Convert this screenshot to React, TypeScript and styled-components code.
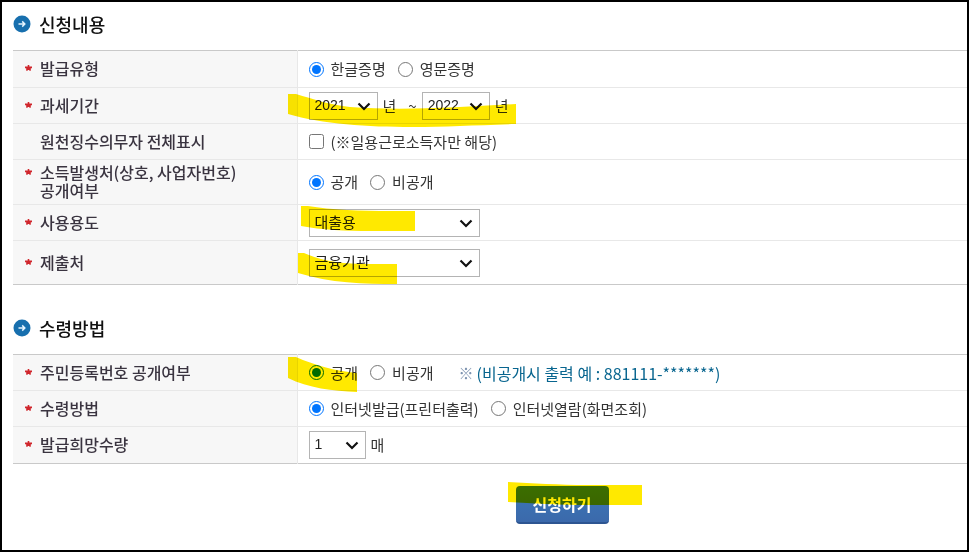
import React, { useId } from "react";
import styled, { createGlobalStyle } from "styled-components";

const GlobalStyle = createGlobalStyle`
  *, *::before, *::after { box-sizing: border-box; }
  html, body, #root { height: 100%; }
  body {
    margin: 0;
    background: #fff;
    color: #333;
    font: 15px/18px "Noto Sans CJK KR", sans-serif;
  }
`;

const Page = styled.form`
  min-height: 100%;
  border: 2px solid #000;
  padding: 0 0 0 11px;
`;

const Section = styled.section`
  padding-top: 7px;
  & + & { padding-top: 28px; }
`;

const SectionTitle = styled.h2`
  display: flex;
  align-items: center;
  gap: 8px;
  height: 30px;
  margin: 0 0 11px;
  color: #111;
  font-size: 18px;
  font-weight: 500;
  line-height: 30px;
`;

const FormTable = styled.table`
  width: 100%;
  border-collapse: collapse;
  border-top: 1px solid #c9c9c9;
  border-bottom: 1px solid #c9c9c9;
`;

const Row = styled.tr<{ $height?: number }>`
  height: ${(p) => p.$height ?? 36}px;
  & + & { border-top: 1px solid #e8e8e8; }
`;

const LabelCell = styled.th`
  width: 284px;
  padding: 0 40px 2px 27px;
  background: #f7f7f7;
  border-right: 1px solid #e8e8e8;
  color: #3a3440;
  font-size: 16px;
  font-weight: 500;
  text-align: left;
  vertical-align: middle;
`;

const LabelText = styled.span`
  position: relative;
  display: block;
`;

const RequiredMark = styled.svg`
  position: absolute;
  left: -15px;
  top: 6px;
`;

const ValueCell = styled.td`
  padding: 0 0 0 11px;
  vertical-align: middle;
`;

const Controls = styled.div`
  position: relative;
  display: flex;
  align-items: center;
  gap: 12px;
`;

const Choice = styled.label`
  display: flex;
  align-items: center;
  gap: 7px;
`;

const ChoiceInput = styled.input`
  flex: none;
  width: 15px;
  height: 15px;
  margin: 0;
  accent-color: #0075ff;
`;

const Period = styled.div`
  display: flex;
  align-items: center;
  gap: 5px;
`;

const SelectBox = styled.span<{ $width: number }>`
  position: relative;
  display: inline-flex;
  width: ${(p) => p.$width}px;
`;

const SelectInput = styled.select<{ $numeric?: boolean }>`
  appearance: none;
  width: 100%;
  height: 28px;
  padding: 0 20px 2px 5px;
  border: 1px solid #b4b4b4;
  border-radius: 0;
  background: #fff;
  color: #222;
  font-family: ${(p) => (p.$numeric ? '"Liberation Sans", sans-serif' : '"Noto Sans CJK KR", sans-serif')};
  font-size: ${(p) => (p.$numeric ? 14 : 15)}px;
`;

const Chevron = styled.svg`
  position: absolute;
  right: 7px;
  top: 10px;
  pointer-events: none;
`;

const Note = styled.span`
  display: flex;
  align-items: center;
  gap: 3px;
  margin-left: 13px;
  color: #08658f;
  font-size: 16px;
`;

const NoteMark = styled.span`
  color: #7d93b0;
  font-size: 15px;
`;

const Actions = styled.div`
  display: flex;
  justify-content: center;
  padding-top: 22px;
`;

const ActionArea = styled.div`
  position: relative;
  margin-left: 144px;
`;

const SubmitButton = styled.button`
  width: 93px;
  height: 38px;
  padding: 0;
  border: 0;
  border-bottom: 2px solid #2d5591;
  border-radius: 4px;
  background: linear-gradient(#3b78b8, #3b69ab);
  color: #fff;
  font: 700 16px/34px "Noto Sans CJK KR", sans-serif;
`;

const Stroke = styled.svg<{ $left: number; $top: number }>`
  position: absolute;
  left: ${(p) => p.$left}px;
  top: ${(p) => p.$top}px;
  overflow: visible;
  mix-blend-mode: multiply;
  pointer-events: none;
`;

interface HighlightProps { left: number; top: number; width: number; height: number; d: string }

function Highlight({ left, top, width, height, d }: HighlightProps) {
  return (
    <Stroke $left={left} $top={top} width={width} height={height} aria-hidden="true">
      <path d={d} fill="#ffe900" />
    </Stroke>
  );
}

function Title({ children }: { children: string }) {
  return (
    <SectionTitle>
      <svg width="18" height="18" viewBox="0 0 18 18" aria-hidden="true">
        <circle cx="9" cy="9" r="8.5" fill="#176fae" />
        <path d="M5.5 9h6M9.2 6.4 11.8 9l-2.6 2.6" fill="none" stroke="#e4f4ff" strokeWidth="1.5" />
      </svg>
      {children}
    </SectionTitle>
  );
}

interface FieldProps { label: React.ReactNode; required?: boolean; height?: number; children: React.ReactNode }

function Field({ label, required = true, height, children }: FieldProps) {
  return (
    <Row $height={height}>
      <LabelCell scope="row">
        <LabelText>
          {required && (
            <RequiredMark width="7" height="7" viewBox="0 0 7 7" aria-hidden="true">
              <path d="M2.7 0h1.6v1.6H7v1.6H5.8v2.6H4.3V5H2.7v.8H1.2V3.2H0V1.6h2.7z" fill="#d0262c" />
            </RequiredMark>
          )}
          {label}
        </LabelText>
      </LabelCell>
      <ValueCell>
        <Controls>{children}</Controls>
      </ValueCell>
    </Row>
  );
}

function Radios({ name, options }: { name: string; options: string[] }) {
  return (
    <>
      {options.map((option, i) => (
        <Choice key={option}>
          <ChoiceInput type="radio" name={name} defaultChecked={i === 0} />
          {option}
        </Choice>
      ))}
    </>
  );
}

interface PickerProps { label: string; value: string; width: number; numeric?: boolean }

function Picker({ label, value, width, numeric }: PickerProps) {
  const id = useId();
  return (
    <SelectBox $width={width}>
      <SelectInput id={id} aria-label={label} $numeric={numeric} defaultValue={value}>
        <option>{value}</option>
      </SelectInput>
      <Chevron width="14" height="9" viewBox="0 0 14 9" aria-hidden="true">
        <path d="M1.5 1.5 7 7l5.5-5.5" fill="none" stroke="#111" strokeWidth="2.2" />
      </Chevron>
    </SelectBox>
  );
}

export default function App() {
  return (
    <>
      <GlobalStyle />
      <Page onSubmit={(e) => e.preventDefault()}>
        <Section>
          <Title>신청내용</Title>
          <FormTable>
            <tbody>
              <Field label="발급유형" height={37}>
                <Radios name="issue-type" options={["한글증명", "영문증명"]} />
              </Field>
              <Field label="과세기간">
                <Period>
                  <Picker label="과세기간 시작" value="2021" width={69} numeric />
                  <span>년</span>
                </Period>
                <Period>
                  <span>~</span>
                  <Picker label="과세기간 종료" value="2022" width={68} numeric />
                  <span>년</span>
                </Period>
                <Highlight left={-21} top={2} width={228} height={34}
                  d="M0 0H8C25 5 42 11 62 13C115 17 174 13 228 10V30C190 31 158 33 124 33C80 33 34 30 0 20Z" />
              </Field>
              <Field label="원천징수의무자 전체표시" required={false}>
                <Choice>
                  <ChoiceInput type="checkbox" name="all-agents" />
                  (※일용근로소득자만 해당)
                </Choice>
              </Field>
              <Field label={<>소득발생처(상호, 사업자번호)<br />공개여부</>} height={45}>
                <Radios name="income-source" options={["공개", "비공개"]} />
              </Field>
              <Field label="사용용도">
                <Picker label="사용용도" value="대출용" width={171} />
                <Highlight left={-8} top={-3} width={114} height={26}
                  d="M0 0H7C30 4 60 5 90 5H114V25H70C45 25 20 24 0 20Z" />
              </Field>
              <Field label="제출처" height={44}>
                <Picker label="제출처" value="금융기관" width={171} />
                <Highlight left={-11} top={4} width={99} height={32}
                  d="M0 0H6C26 9 47 11 70 11H99V31C66 31 32 30 0 20Z" />
              </Field>
            </tbody>
          </FormTable>
        </Section>

        <Section>
          <Title>수령방법</Title>
          <FormTable>
            <tbody>
              <Field label="주민등록번호 공개여부">
                <Radios name="resident-number" options={["공개", "비공개"]} />
                <Note><NoteMark>※</NoteMark>(비공개시 출력 예 : 881111-*******)</Note>
                <Highlight left={-21} top={-7} width={69} height={36}
                  d="M0 0H8C26 8 47 14 69 16V35C45 34 20 31 0 21Z" />
              </Field>
              <Field label="수령방법">
                <Radios name="delivery" options={["인터넷발급(프린터출력)", "인터넷열람(화면조회)"]} />
              </Field>
              <Field label="발급희망수량" height={37}>
                <Period>
                  <Picker label="발급희망수량" value="1" width={57} numeric />
                  <span>매</span>
                </Period>
              </Field>
            </tbody>
          </FormTable>
        </Section>

        <Actions>
          <ActionArea>
            <SubmitButton type="submit">신청하기</SubmitButton>
            <Highlight left={-8} top={-4} width={134} height={24}
              d="M0 0C25 1 50 3 80 3H134V23H76C50 23 25 21 0 20Z" />
          </ActionArea>
        </Actions>
      </Page>
    </>
  );
}
